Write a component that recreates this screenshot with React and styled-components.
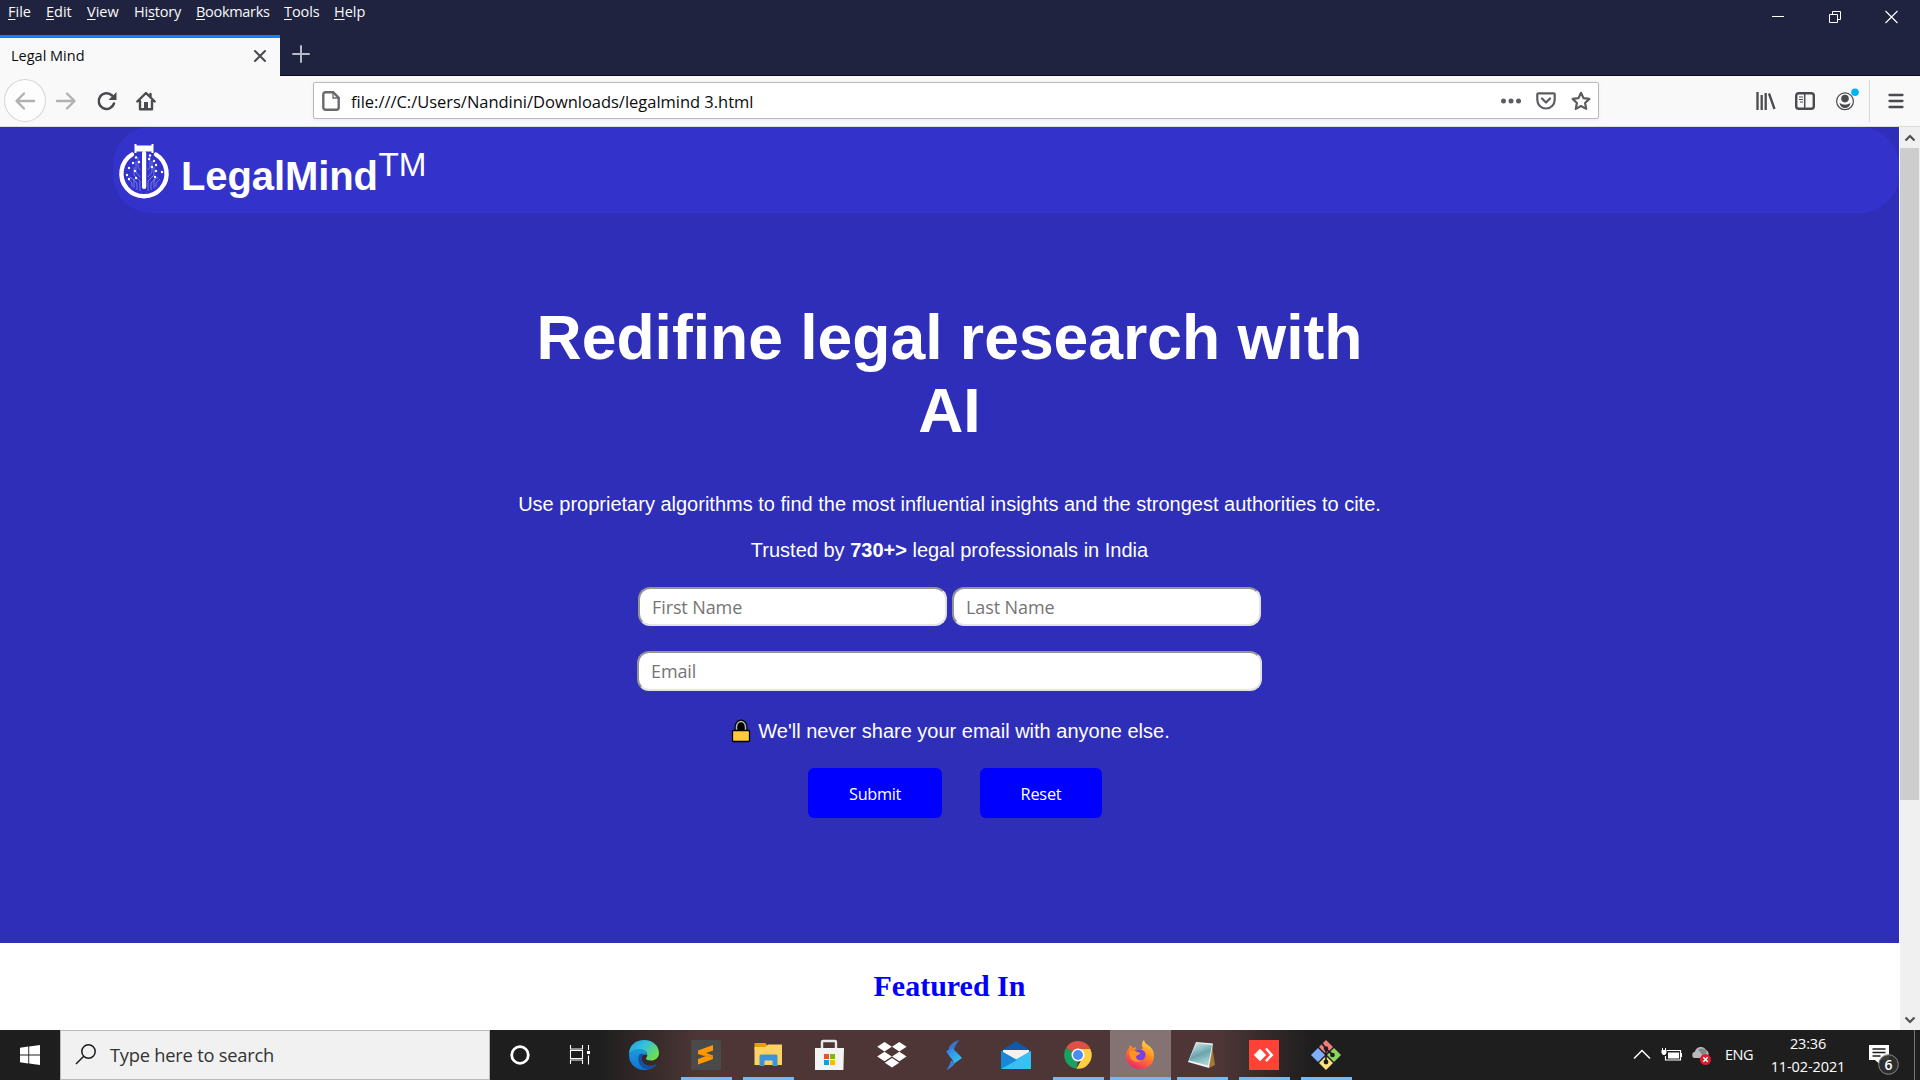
import React from "react";
import styled, { createGlobalStyle, css } from "styled-components";

const Global = createGlobalStyle`
  * { box-sizing: border-box; }
  html, body { margin: 0; padding: 0; overflow: hidden; background: #fff; }
`;

const ui = `"Open Sans", "Noto Sans", sans-serif`;
const sans = `"Liberation Sans", Arial, sans-serif`;

const Screen = styled.div`
  width: 1920px;
  height: 1080px;
  display: flex;
  flex-direction: column;
  overflow: hidden;
  font-family: ${ui};
`;

const Label = styled.span`
  display: block;
  white-space: pre;
  letter-spacing: ${(p) => p.$ls || 0}px;
`;

/* ---------- browser chrome ---------- */
const TitleBar = styled.div`
  height: 34px;
  display: flex;
  justify-content: space-between;
  background: #20233f;
`;
const MenuList = styled.div`
  display: flex;
  padding-left: 8px;
`;
const MenuItem = styled.div`
  width: ${(p) => p.$w}px;
  font-size: 14.5px;
  line-height: 20px;
  padding-top: 2px;
  color: #f9f9fa;
  u { text-underline-offset: 2px; text-decoration-thickness: 1px; }
`;
const WindowButtons = styled.div`
  display: flex;
  height: 34px;
`;
const WindowButton = styled.div`
  width: 57px;
  display: flex;
  justify-content: center;
  padding-top: 10px;
`;
const TabStrip = styled.div`
  height: 42px;
  display: flex;
  background: #20233f;
  border-bottom: 1px solid #0c0c1d;
`;
const Tab = styled.div`
  width: 280px;
  height: 42px;
  margin-top: 1px;
  display: flex;
  align-items: center;
  justify-content: space-between;
  padding: 0 13.5px 4px 11px;
  border-top: 3px solid #0a84ff;
  background: #f9f9fa;
  font-size: 14.5px;
  line-height: 19px;
  color: #0c0c0d;
`;
const NewTab = styled.div`
  padding: 11px 0 0 12px;
`;
const NavBar = styled.div`
  height: 51px;
  display: flex;
  align-items: flex-start;
  background: #f9f9fa;
  border-bottom: 1px solid #dcdcde;
`;
const NavButtons = styled.div`
  display: flex;
  align-items: center;
  width: 313px;
  height: 50px;
  padding: 0 0 1px 4px;
`;
const BackButton = styled.div`
  width: 42px;
  height: 43px;
  border-radius: 50%;
  border: 1px solid #d6d6d7;
  background: #fdfdfd;
  display: flex;
  align-items: center;
  justify-content: center;
`;
const NavIcon = styled.div`
  width: 20px;
  height: 20px;
  margin-left: ${(p) => p.$gap}px;
`;
const UrlBar = styled.div`
  width: 1286px;
  height: 37px;
  margin-top: 6px;
  display: flex;
  align-items: center;
  border: 1px solid #b9b9bb;
  border-radius: 2px;
  background: #fff;
  box-shadow: 0 1px 4px rgba(0, 0, 0, 0.06);
  padding: 0 7px 0 8px;
`;
const UrlText = styled.div`
  flex: 1;
  margin-left: 11px;
  padding-top: 2px;
  font-size: 16.5px;
  line-height: 22px;
  color: #0c0c0d;
`;
const ToolButtons = styled.div`
  display: flex;
  align-items: center;
  height: 50px;
  padding-left: 157px;
`;
const ToolSeparator = styled.div`
  width: 1px;
  height: 42px;
  background: #d7d7db;
  margin: 0 18px 0 14px;
`;

/* ---------- page ---------- */
const Viewport = styled.div`
  height: 903px;
  display: flex;
`;
const Page = styled.div`
  width: 1899px;
  background: #fff;
`;
const Hero = styled.section`
  height: 816px;
  background: #2e2eb8;
  display: flex;
  flex-direction: column;
  align-items: center;
  color: #fff;
  font-family: ${sans};
`;
const Brand = styled.header`
  align-self: stretch;
  margin-left: 113px;
  height: 86px;
  flex: none;
  border-radius: 38px;
  background: #3333cc;
  display: flex;
  padding: 16px 0 0 5px;
`;
const BrandName = styled.div`
  margin: 10px 0 0 11px;
  font-size: 40px;
  line-height: 46px;
  font-weight: 700;
`;
const Trademark = styled.div`
  margin: 2px 0 0 0.5px;
  font-size: 33.3px;
  line-height: 39px;
`;
const Title = styled.h1`
  width: 860px;
  margin: 88px 0 0;
  font-size: 62.45px;
  line-height: 73px;
  font-weight: 700;
  text-align: center;
`;
const Lead = styled.p`
  margin: ${(p) => p.$top}px 0 0;
  font-size: 20px;
  line-height: 23px;
  white-space: pre;
`;
const Fields = styled.div`
  display: flex;
  gap: 5px;
  margin-top: ${(p) => p.$top}px;
`;
const Field = styled.input`
  width: ${(p) => p.$w}px;
  height: ${(p) => p.$h}px;
  border: 2px solid;
  border-color: #949494 #e3e3e3 #e3e3e3 #949494;
  border-radius: 12px;
  padding: 0 12px;
  background: #fff;
  font-family: ${ui};
  font-size: 18px;
  outline: none;
  &::placeholder { color: #757575; opacity: 1; letter-spacing: -0.1px; }
`;
const Privacy = styled.div`
  display: flex;
  align-items: center;
  gap: 7px;
  margin: 28px 0 0 2px;
  font-size: 20px;
  line-height: 23px;
`;
const Buttons = styled.div`
  display: flex;
  gap: 38px;
  margin: 25px 0 0 11px;
`;
const Button = styled.button`
  width: ${(p) => p.$w}px;
  height: 50px;
  border: 0;
  border-radius: 6px;
  background: #0000ff;
  color: #fff;
  font-family: ${ui};
  font-size: 16.3px;
  padding: 2px 0 0;
  display: flex;
  align-items: center;
  justify-content: center;
`;
const Featured = styled.h2`
  margin: 26px 0 0;
  text-align: center;
  font-family: "Liberation Serif", "Times New Roman", serif;
  font-size: 30px;
  line-height: 34px;
  font-weight: 700;
  color: #0000ff;
`;
const Scrollbar = styled.div`
  width: 21px;
  border-left: 1px solid #fff;
  background: #f0f0f0;
  display: flex;
  flex-direction: column;
  align-items: center;
`;
const ScrollArrow = styled.div`
  height: 21px;
  display: flex;
  align-items: center;
  margin-right: 1px;
`;
const Thumb = styled.div`
  width: 19px;
  height: 652px;
  margin: 0 1px auto 0;
  background: #cdcdcd;
`;

/* ---------- taskbar ---------- */
const Taskbar = styled.div`
  height: 50px;
  display: flex;
  background: linear-gradient(90deg, #1e1e1e 0, #1e1e1e 600px, #4e3636 700px, #4e3636 1220px, #1e1e1e 1310px, #1e1e1e 100%);
  color: #fff;
`;
const Start = styled.div`
  width: 60px;
  padding: 15px 0 0 20px;
`;
const Search = styled.div`
  width: 430px;
  height: 50px;
  display: flex;
  align-items: center;
  padding-left: 14px;
  border: 1px solid #b9b9b9;
  background: #f1f1f1;
  color: #333;
  font-size: 18.3px;
`;
const SearchText = styled.div`
  margin: 0 0 2px 13px;
`;
const Apps = styled.div`
  display: flex;
  margin-left: -1px;
`;
const AppButton = styled.div`
  width: 62px;
  height: 50px;
  display: flex;
  flex-direction: column;
  align-items: center;
  justify-content: space-between;
  padding-top: 10px;
  ${(p) => p.$active && css`background: linear-gradient(90deg, transparent 1px, #857272 1px);`}
`;
const Running = styled.div`
  width: ${(p) => (p.$wide ? 61 : 51)}px;
  height: 3px;
  margin-left: 1px;
  background: #76b9ed;
`;
const Tray = styled.div`
  flex: 1;
  display: flex;
  justify-content: flex-end;
`;
const TrayIcons = styled.div`
  display: flex;
  align-items: flex-start;
  padding-top: 15px;
`;
const Language = styled.div`
  width: 28px;
  margin: 14px 0 0 14px;
  font-size: 14.5px;
  line-height: 22px;
`;
const Clock = styled.div`
  width: 76px;
  margin: 2px 0 0 17px;
  display: flex;
  flex-direction: column;
  align-items: center;
  font-size: 14.5px;
  line-height: 23px;
`;
const Notice = styled.div`
  margin: 14px 0 0 22px;
`;
const Desktop = styled.div`
  width: 6px;
  margin-left: 14px;
  border-left: 1px solid #777;
`;

const menu = [
  ["", "F", "ile", 38, 0],
  ["", "E", "dit", 41, 0],
  ["", "V", "iew", 47, 0],
  ["Hi", "s", "tory", 62, -0.2],
  ["", "B", "ookmarks", 88, -0.3],
  ["", "T", "ools", 50, -0.1],
  ["", "H", "elp", 40, 0],
];

const Icon = ({ w = 20, h = w, children }) => (
  <svg width={w} height={h} viewBox={`0 0 ${w} ${h}`} fill="none" display="block" overflow="visible">
    {children}
  </svg>
);

const nodes = [[18,14.5],[15,20],[11,25],[17,28],[9,32],[11,36],[18,35],[32,12.5],[36,18],[38,22],[38,28],[44,29],[37,34],[31,16],[21,19],[34,24]];

const Logo = () => (
  <Icon w={52} h={56}>
    <path d="M14 11.5 A22.6 22.6 0 1 0 38 11.5" stroke="#fff" strokeWidth="4.4" strokeLinecap="round" />
    <path d="M22 48V38l-6-6v-8M19 47V40l-7-6M22 34l-4-5V18M10 36l4 4v4M22 27l-2-3V14M16 45v-9M30 48V38l6-6v-8M33 47V40l7-6M30 34l4-5V18M42 36l-4 4v4M30 27l2-3V14M36 45v-9" stroke="#8f8fea" strokeWidth="1" opacity=".75" />
    <g fill="#fff">
      {nodes.map(([x, y]) => (
        <circle key={`${x}-${y}`} cx={x} cy={y} r="1.2" />
      ))}
      <path d="M16.500 1h2v1.500h15V1h2v9h-2V8.500h-15V10h-2z" />
      <rect x="24" y="8" width="4.200" height="38" rx="2" />
    </g>
  </Icon>
);

const apps = [
  { name: "cortana", art: <circle cx="15" cy="15" r="8.300" stroke="#fff" strokeWidth="2.800" /> },
  {
    name: "tasks",
    art: (
      <g stroke="#fff" strokeWidth="1.1">
        <path d="M3.500 5v4h12V5M3.500 24v-4h12v4M3.500 10.500h12v8h-12zM21.500 5v5M21.500 15.500v9" />
        <rect x="20.500" y="11.500" width="2" height="2" fill="#fff" />
      </g>
    ),
  },
  {
    name: "edge",
    art: (
      <>
        <defs>
          <linearGradient id="e1" x1="0" y1="0" x2="1" y2=".6"><stop offset="0" stopColor="#1b9de2" /><stop offset=".5" stopColor="#35c1dd" /><stop offset="1" stopColor="#6be04a" /></linearGradient>
          <linearGradient id="e2" x1="0" y1="0" x2="0" y2="1"><stop offset="0" stopColor="#1c9be0" /><stop offset="1" stopColor="#0f74d0" /></linearGradient>
        </defs>
        <path d="M0 14C0 5 7 0 15 0c9 0 15 6 15 13 0 5-4 7.500-8 7.500-3 0-5-1-5-2 0-.8 1.300-1.500 1.300-3.500 0-3-3-5.500-7.300-5.500C6 9.500 2 11 0 14z" fill="url(#e1)" />
        <path d="M0 15C1 11 5 8.800 10 9c5 .2 8 3 8 6-4-2-7 2-5 6 2 5 9 7 14.500 3.500C25 28 20 30 15 30 6 30 0 23 0 15z" fill="url(#e2)" />
        <path d="M9.500 17c-1 6 3 12 9 12.500 4-.5 7-2.500 9-5.500C22 27 14.500 25.500 12.800 20c-.8-3 .5-5 2-6-3-1-4.800 0-5.300 3z" fill="#174f9e" />
      </>
    ),
  },
  {
    name: "sublime", run: 1,
    art: (
      <>
        <rect width="30" height="30" rx="1.500" fill="#4a4a4a" />
        <path d="M7 10.500 22 5v5.500L15 13l7 2.500V19L7 24.500V19l7.500-2.800L7 14z" fill="#ff9800" />
        <path d="M7 14l15 2v2.500z" fill="#d97a00" opacity=".5" />
      </>
    ),
  },
  {
    name: "files", run: 1,
    art: (
      <>
        <path d="M1.500 3h11l2 3v4h-13z" fill="#e3a100" />
        <path d="M1.500 7h11l2.500-2.500h14V25h-27.500z" fill="#fdd265" />
        <path d="M6.500 26V16q0-1.500 1.500-1.500h15q1.500 0 1.500 1.500v10h-5v-5.500h-8V26z" fill="#3a93dc" />
      </>
    ),
  },
  {
    name: "store",
    art: (
      <g transform="translate(-1,0)">
        <path d="M8 9V2q0-1 1-1h12q1 0 1 1v7" stroke="#e8e8e8" strokeWidth="2.400" />
        <path d="M1 8h29l-.6 22H1z" fill="#f3f3f3" />
        <path d="M10 14h5v5h-5z" fill="#f25022" /><path d="M16 14h5v5h-5z" fill="#7fba00" />
        <path d="M10 20h5v5h-5z" fill="#00a4ef" /><path d="M16 20h5v5h-5z" fill="#ffb900" />
      </g>
    ),
  },
  {
    name: "dropbox",
    art: <path fill="#fff" d="M7.500 2l7.300 4.700-7.300 4.800L.2 6.700zM22.300 2l7.300 4.700-7.300 4.800L15 6.700zM7.500 11.800l7.300 4.700-7.300 4.800L.2 16.500zM22.300 11.800l7.300 4.700-7.300 4.800L15 16.500zM15 18l7.200 4.700L15 27.500l-7.200-4.800z" />,
  },
  {
    name: "stream",
    art: (
      <>
        <defs><linearGradient id="s1" x1="0" y1="0" x2="1" y2="1"><stop offset="0" stopColor="#2f78e8" /><stop offset="1" stopColor="#31d3f5" /></linearGradient></defs>
        <path d="M20.500 0C13 2 10 6 9.500 9l5 3.500c0-4 2.500-8.500 6-12.500z" fill="#3b74c8" />
        <path d="M7 11 13.500 8l9.500 10-8.500 6c0-3-1-4.500-3.500-7z" fill="url(#s1)" />
        <path d="M12 20.500l4 2.500c-2 3-4.500 5.500-8.500 7 2.500-3.500 3.500-6 4.500-9.500z" fill="#3b7fd8" />
      </>
    ),
  },
  {
    name: "mail",
    art: (
      <>
        <path d="M0 11 15 1l15 10v4H0z" fill="#0f5aa8" />
        <path d="M2 10h26v10H2z" fill="#f2f2f2" />
        <path d="M0 11l15 8.500L30 11v18H0z" fill="#2ea8e8" />
        <path d="M0 29 19 17.500 30 11v18z" fill="#39c0f2" />
        <path d="M0 11l16 9L0 29z" fill="#1a86d6" />
      </>
    ),
  },
  {
    name: "chrome", run: 1,
    art: (
      <>
        <path d="M15 15 3 8a13.800 13.800 0 0 1 24.500 1z" fill="#dd5144" />
        <path d="M15 15 3 8a13.800 13.800 0 0 0 11 20.700z" fill="#1aa15f" />
        <path d="M15 15h6l-7.500 13.700A13.800 13.800 0 0 0 27.300 9H15z" fill="#ffce43" />
        <circle cx="15" cy="15" r="6.500" fill="#fff" /><circle cx="15" cy="15" r="5" fill="#4c8bf5" />
      </>
    ),
  },
  {
    name: "firefox", run: 1, active: 1,
    art: (
      <>
        <defs>
          <linearGradient id="f1" x1=".8" y1="0" x2=".3" y2="1"><stop offset="0" stopColor="#ffe34a" /><stop offset=".45" stopColor="#ff8a1e" /><stop offset="1" stopColor="#f0246c" /></linearGradient>
        </defs>
        <path d="M1 16c0-4 1-6 3-8l1-3 3 3 3-1c0 2-1 3-2 4 3 0 8-1 9-3-2-2-1-6 1-8 1 4 3 4 5 6 3 2 5 5 5 10 0 8-6 13-14 13S1 23 1 16z" fill="url(#f1)" />
        <circle cx="15" cy="15" r="5.600" fill="#7a3fe0" />
        <path d="M4 12c3-2 6-1 8 0 2 .5 3 0 3 1.500-1 1.500-3 1.500-4 3 0 3 3 4.500 6 4-4 3-11 1-12-4z" fill="#ff9420" />
      </>
    ),
  },
  {
    name: "notepad", run: 1,
    art: (
      <>
        <defs><linearGradient id="n1" x1="0" y1="0" x2=".4" y2="1"><stop offset="0" stopColor="#d9eef0" /><stop offset=".6" stopColor="#6aa5ae" /><stop offset="1" stopColor="#a5d0d4" /></linearGradient></defs>
        <path d="M25 5l3 20-6 3z" fill="#a07a30" />
        <path d="M9 2l17 1.500L22 28 1 22z" fill="#f0f4f4" />
        <path d="M9.500 3 25 5l-4 20.500L2 20.500z" fill="url(#n1)" />
      </>
    ),
  },
  {
    name: "anydesk", run: 1,
    art: (
      <>
        <rect width="30" height="30" fill="#ff4237" />
        <path d="M11 8.800l6.200 6.200L11 21.200 4.800 15z" fill="#fff" />
        <path d="M16 9l2-1 6.500 7-6.500 6.800-2-1.300 5-5.500z" fill="#fff" />
      </>
    ),
  },
  {
    name: "git", run: 1,
    art: (
      <>
        <path d="M15 0l7 7-7 7-7-7z" fill="#f47c7c" />
        <path d="M7 8l7 7-7 7-7-7z" fill="#7fb0ff" />
        <path d="M23 8l7 7-7 7-7-7z" fill="#8cd35f" />
        <path d="M15 16l7 7-7 7-7-7z" fill="#ffe27d" />
        <path d="M10.500 2.500 15 9v13M15 9l7 6" stroke="#1d1d1d" strokeWidth="1.700" />
        <circle cx="15" cy="8.500" r="2.200" fill="#1d1d1d" /><circle cx="15" cy="22" r="2.400" fill="#1d1d1d" /><circle cx="21.500" cy="15" r="2.300" fill="#1d1d1d" />
      </>
    ),
  },
];

export default function App() {
  return (
    <Screen>
      <Global />
      <TitleBar>
        <MenuList>
          {menu.map(([a, b, c, w, ls]) => (
            <MenuItem key={b + c} $w={w}><Label $ls={ls}>{a}<u>{b}</u>{c}</Label></MenuItem>
          ))}
        </MenuList>
        <WindowButtons>
          <WindowButton><Icon w={14}><path d="M1 6.500h12" stroke="#fff" /></Icon></WindowButton>
          <WindowButton><Icon w={14}><path d="M1.500 4.500h8v8h-8zM4.500 4V1.500h8v8H10" stroke="#fff" /></Icon></WindowButton>
          <WindowButton><Icon w={14}><path d="M.5 1l12 12M12.500 1 .5 13" stroke="#fff" strokeWidth="1.100" /></Icon></WindowButton>
        </WindowButtons>
      </TitleBar>
      <TabStrip>
        <Tab>
          <Label>Legal Mind</Label>
          <Icon w={14}><path d="M2 2l10 10M12 2 2 12" stroke="#4a4a4f" strokeWidth="2" strokeLinecap="round" /></Icon>
        </Tab>
        <NewTab><Icon w={18}><path d="M9 1v16M1 9h16" stroke="#b8b9c6" strokeWidth="2" strokeLinecap="round" /></Icon></NewTab>
      </TabStrip>
      <NavBar>
        <NavButtons>
          <BackButton><Icon><path d="M19 10H2M9 2.500 1.500 10 9 17.500" stroke="#b1b1b3" strokeWidth="2.400" strokeLinecap="round" strokeLinejoin="round" /></Icon></BackButton>
          <NavIcon $gap={10}><Icon><path d="M1 10h17M11 2.500 18.500 10 11 17.500" stroke="#b1b1b3" strokeWidth="2.400" strokeLinecap="round" strokeLinejoin="round" /></Icon></NavIcon>
          <NavIcon $gap={21}><Icon><path d="M17 12.500A7.800 7.800 0 1 1 15 4.500" stroke="#4a4a4f" strokeWidth="2.500" strokeLinecap="round" /><path d="M19.500 1v8h-8z" fill="#4a4a4f" /></Icon></NavIcon>
          <NavIcon $gap={19}><Icon><path d="M1.300 10.500 10 2l8.700 8.500M4 10v8.300h12V10M14.500 3v3" stroke="#4a4a4f" strokeWidth="2.400" strokeLinecap="round" strokeLinejoin="round" /><path d="M8 11h4v7H8z" fill="#4a4a4f" /></Icon></NavIcon>
        </NavButtons>
        <UrlBar>
          <Icon w={18} h={20}><path d="M3.500 1.300h7.700l5.500 5.500v9.700a2.200 2.200 0 0 1-2.200 2.200h-11a2.200 2.200 0 0 1-2.200-2.200v-13a2.200 2.200 0 0 1 2.200-2.200z" stroke="#6a6a6d" strokeWidth="2.400" /><path d="M11 2v5h5" stroke="#6a6a6d" strokeWidth="1.300" /></Icon>
          <UrlText><Label $ls={-0.02}>file:///C:/Users/Nandini/Downloads/legalmind 3.html</Label></UrlText>
          <Icon><g fill="#5d5d61"><circle cx="2.500" cy="10" r="2.500" /><circle cx="10" cy="10" r="2.500" /><circle cx="17.500" cy="10" r="2.500" /></g></Icon>
          <NavIcon $gap={15}><Icon><path d="M2.500 2.300h15a1.200 1.200 0 0 1 1.200 1.200v5.300a8.700 8.700 0 0 1-17.400 0V3.500a1.200 1.200 0 0 1 1.200-1.200z" stroke="#5d5d61" strokeWidth="2.200" /><path d="M6 7.500l4 4 4-4" stroke="#5d5d61" strokeWidth="2.300" strokeLinecap="round" strokeLinejoin="round" /></Icon></NavIcon>
          <NavIcon $gap={15}><Icon><path d="M10 1.800l2.500 5.300 5.900.8-4.300 4.100 1.100 5.900L10 15l-5.200 2.900 1.100-5.900L1.600 7.900l5.900-.8z" stroke="#5d5d61" strokeWidth="2.200" strokeLinejoin="round" /></Icon></NavIcon>
        </UrlBar>
        <ToolButtons>
          <NavIcon $gap={0}><Icon><path d="M1.500 1v18M5.700 4v15M9.700 2v17M13 2.500l5.500 15.500" stroke="#4a4a4f" strokeWidth="2.300" /></Icon></NavIcon>
          <NavIcon $gap={19}><Icon><rect x="1.200" y="2.200" width="17.600" height="15.600" rx="2.500" stroke="#4a4a4f" strokeWidth="2.400" /><path d="M9.700 3v14" stroke="#4a4a4f" strokeWidth="1.500" /><path d="M4 6h4M4 8.500h4M5 11h3" stroke="#4a4a4f" /></Icon></NavIcon>
          <NavIcon $gap={20}><Icon><circle cx="10" cy="10.300" r="8.400" stroke="#4a4a4f" strokeWidth="1.200" /><circle cx="10" cy="7.600" r="3.800" fill="#4a4a4f" /><path d="M4.500 12.100q5.500 3.500 11 0-1 5-5.500 5t-5.500-5z" fill="#4a4a4f" /><circle cx="20" cy="1.300" r="3.800" fill="#00b3f4" /></Icon></NavIcon>
          <ToolSeparator />
          <Icon w={16} h={18}><path d="M1.500 3h13M1.500 9h13M1.500 15h13" stroke="#4a4a4f" strokeWidth="2.300" strokeLinecap="round" /></Icon>
        </ToolButtons>
      </NavBar>
      <Viewport>
        <Page>
          <Hero>
            <Brand>
              <Logo />
              <BrandName><Label $ls={-0.1}>LegalMind</Label></BrandName>
              <Trademark><Label>TM</Label></Trademark>
            </Brand>
            <Title>Redifine legal research with AI</Title>
            <Lead $top={46}>Use proprietary algorithms to find the most influential insights and the strongest authorities to cite.</Lead>
            <Lead $top={23}>Trusted by <b>730+&gt;</b> legal professionals in India</Lead>
            <Fields $top={25}>
              <Field $w={309} $h={39} placeholder="First Name" />
              <Field $w={309} $h={39} placeholder="Last Name" />
            </Fields>
            <Fields $top={25}>
              <Field $w={625} $h={40} placeholder="Email" />
            </Fields>
            <Privacy>
              <Icon w={20} h={24}><path d="M5.500 11V8a4.500 5.500 0 0 1 9 0v3" fill="#000" stroke="#000" strokeWidth="4" /><path d="M5.500 11V8a4.500 5.500 0 0 1 9 0v3" stroke="#b5b5b5" strokeWidth="1.500" /><rect x="1.500" y="11.500" width="17" height="11" rx="1" fill="#ffc83d" stroke="#000" strokeWidth="1.300" /></Icon>
              <Label>We'll never share your email with anyone else.</Label>
            </Privacy>
            <Buttons>
              <Button $w={134}><Label $ls={-0.35}>Submit</Label></Button>
              <Button $w={122}><Label $ls={-0.2}>Reset</Label></Button>
            </Buttons>
          </Hero>
          <Featured>Featured In</Featured>
        </Page>
        <Scrollbar>
          <ScrollArrow><Icon w={12} h={8}><path d="M1.500 6.500 6 2l4.500 4.500" stroke="#505050" strokeWidth="2.200" /></Icon></ScrollArrow>
          <Thumb />
          <ScrollArrow><Icon w={12} h={8}><path d="M1.500 1.500 6 6l4.500-4.500" stroke="#505050" strokeWidth="2.200" /></Icon></ScrollArrow>
        </Scrollbar>
      </Viewport>
      <Taskbar>
        <Start><Icon><path fill="#fff" d="M0 2.700 8.300 1.500V9.500H0zM9.200 1.400 20 0v9.500H9.200zM0 10.500h8.300v8L0 17.300zM9.200 10.500H20V20L9.200 18.600z" /></Icon></Start>
        <Search>
          <Icon w={22}><circle cx="13.500" cy="7.500" r="6.700" stroke="#1a1a1a" strokeWidth="1.500" /><path d="M8.700 12.200 1 20" stroke="#1a1a1a" strokeWidth="1.500" /></Icon>
          <SearchText><Label $ls={-0.22}>Type here to search</Label></SearchText>
        </Search>
        <Apps>
          {apps.map((a) => (
            <AppButton key={a.name} $active={a.active}>
              <Icon w={30}>{a.art}</Icon>
              {a.run && <Running $wide={a.active} />}
            </AppButton>
          ))}
        </Apps>
        <Tray>
          <TrayIcons>
            <Icon w={18} h={20}><path d="M1 13.500 9 5.500l8 8" stroke="#fff" strokeWidth="1.500" /></Icon>
            <NavIcon $gap={10}><Icon w={21} h={20}><path d="M6 5.500h13.500v9.500H4.500V11" stroke="#fff" strokeWidth="1.200" /><path d="M7 7.500h11v6H7zM20 8h1v4h-1zM.5 5h5v3l-1.500 2H2L.5 8zM1 3h1v2H1zM4 3h1v2H4z" fill="#fff" /></Icon></NavIcon>
            <NavIcon $gap={10}><Icon w={20}><path d="M3 13a3.500 3.500 0 0 1 1-6.500 6 6 0 0 1 11-1.500 4 4 0 0 1 1 7L12 13z" fill="#b9b9b9" /><path d="M7 4.500a6 6 0 0 1 9 3l-4 3z" fill="#858585" /><circle cx="14.500" cy="14.500" r="5.500" fill="#d8202c" /><path d="M12.300 12.300l4.400 4.400M16.700 12.300l-4.400 4.400" stroke="#fff" strokeWidth="1.500" /></Icon></NavIcon>
          </TrayIcons>
          <Language><Label $ls={-0.5}>ENG</Label></Language>
          <Clock><Label $ls={-0.2}>23:36</Label><Label $ls={-0.1}>11-02-2021</Label></Clock>
          <Notice>
            <Icon w={32} h={32}>
              <path d="M1 1h20v15H11.500v4L7 16H1z" fill="#fff" /><path d="M4.500 5h13M4.500 8.500h13M4.500 12h8" stroke="#1e1e1e" strokeWidth="1.300" />
              <circle cx="20.500" cy="20.500" r="9.800" fill="#2e2e2e" fillOpacity=".93" stroke="#8a8a8a" />
              <text x="20.500" y="25.500" fill="#fff" fontSize="14" fontWeight="600" textAnchor="middle" fontFamily="Open Sans">6</text>
            </Icon>
          </Notice>
          <Desktop />
        </Tray>
      </Taskbar>
    </Screen>
  );
}
